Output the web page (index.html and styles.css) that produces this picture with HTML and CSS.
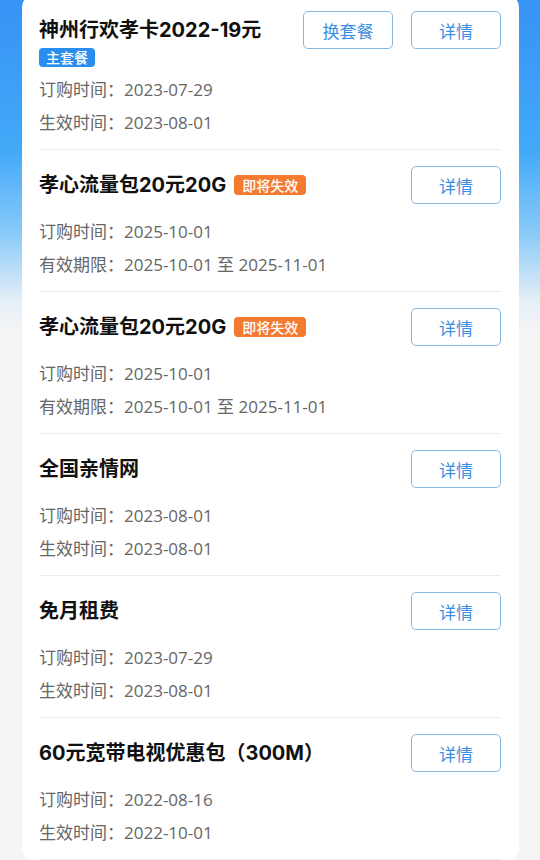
FILE: index.html
```html
<!DOCTYPE html>
<html lang="zh-CN">
<head>
  <meta charset="utf-8">
  <title>已订购套餐</title>
  <link rel="stylesheet" href="styles.css">
</head>
<body>
  <div class="card">

    <div class="item item-main">
      <div class="head">
        <div class="head-left">
          <div class="title">神州行欢孝卡2022-19元</div>
          <span class="tag tag-blue">主套餐</span>
        </div>
        <div class="btns">
          <button class="btn">换套餐</button>
          <button class="btn">详情</button>
        </div>
      </div>
      <div class="meta">
        <p>订购时间：2023-07-29</p>
        <p>生效时间：2023-08-01</p>
      </div>
    </div>

    <div class="item">
      <div class="head">
        <div class="title">孝心流量包20元20G <span class="tag tag-orange">即将失效</span></div>
        <button class="btn">详情</button>
      </div>
      <div class="meta">
        <p>订购时间：2025-10-01</p>
        <p>有效期限：2025-10-01 至 2025-11-01</p>
      </div>
    </div>

    <div class="item">
      <div class="head">
        <div class="title">孝心流量包20元20G <span class="tag tag-orange">即将失效</span></div>
        <button class="btn">详情</button>
      </div>
      <div class="meta">
        <p>订购时间：2025-10-01</p>
        <p>有效期限：2025-10-01 至 2025-11-01</p>
      </div>
    </div>

    <div class="item">
      <div class="head">
        <div class="title">全国亲情网</div>
        <button class="btn">详情</button>
      </div>
      <div class="meta">
        <p>订购时间：2023-08-01</p>
        <p>生效时间：2023-08-01</p>
      </div>
    </div>

    <div class="item">
      <div class="head">
        <div class="title">免月租费</div>
        <button class="btn">详情</button>
      </div>
      <div class="meta">
        <p>订购时间：2023-07-29</p>
        <p>生效时间：2023-08-01</p>
      </div>
    </div>

    <div class="item">
      <div class="head">
        <div class="title">60元宽带电视优惠包（300M）</div>
        <button class="btn">详情</button>
      </div>
      <div class="meta">
        <p>订购时间：2022-08-16</p>
        <p>生效时间：2022-10-01</p>
      </div>
    </div>

  </div>
</body>
</html>
```

FILE: styles.css
```css
body {
  margin: 0;
  font-family: "Open Sans", "Noto Sans CJK SC", sans-serif;
  background: #f5f5f5 linear-gradient(to bottom, #3793f5 0, #42a9f8 150px, #8bcbf8 235px, #e4eef6 300px, #f5f5f5 335px) no-repeat;
  background-size: 100% 340px;
  overflow: hidden;
}
.card { background: #fff; margin: -5px 21px 0 22px; padding: 0 18px 0 17px; border-radius: 12px; }
.item { padding: 16px 0 10px; border-bottom: 1px solid #ececec; }
.head { display: flex; align-items: center; justify-content: space-between; min-height: 38px; }
.item-main .head { align-items: flex-start; }
.head-left { display: flex; flex-direction: column; align-items: flex-start; }
.title {
  font-family: Inter, "Noto Sans CJK SC", sans-serif;
  font-size: 20px; font-weight: 700; color: #111; line-height: 38px;
  display: flex; align-items: center;
}
.head-left .tag { margin-top: -1px; }
.tag { display: inline-block; font-family: "Noto Sans CJK SC", sans-serif; font-size: 14px; font-weight: 500; color: #fff; line-height: 20px; padding: 0 7px; border-radius: 4px; }
.tag-blue { background: #2a8ef0; line-height: 19px; }
.tag-orange { background: #f47a30; margin-left: 8px; padding: 0 8px; }
.btns { display: flex; gap: 18px; }
.btn {
  width: 90px; height: 38px; box-sizing: border-box;
  background: #fff; border: 1px solid #86b7df; border-radius: 5px;
  color: #3b8fe3; font-size: 17px; font-family: inherit; padding: 0;
}
.meta { margin-top: 11px; }
.item-main .meta { margin-top: 6px; }
.meta p { margin: 0; font-size: 17px; line-height: 33px; color: #666; }
```
